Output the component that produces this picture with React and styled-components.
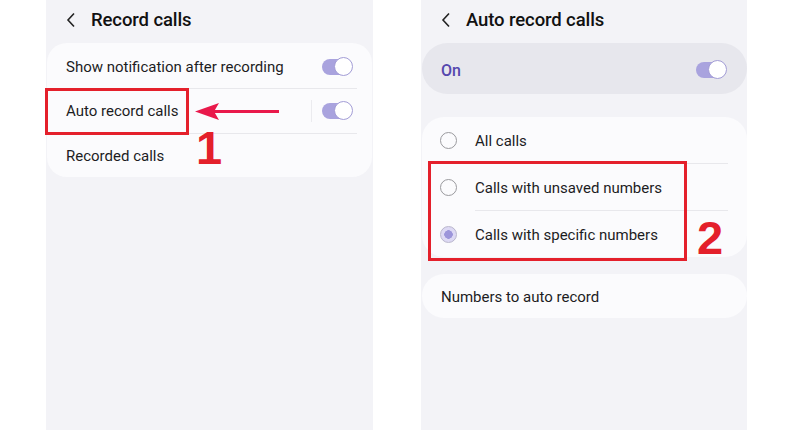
import React from "react";
import styled, { createGlobalStyle } from "styled-components";

const Global = createGlobalStyle`
  html, body { margin: 0; padding: 0; background: #ffffff; }
  body { font-family: Roboto, "Noto Sans", sans-serif; color: #1c1c1e; }
`;

const Page = styled.div`
  width: 800px;
  height: 430px;
  display: flex;
  gap: 48px;
  padding-left: 46px;
  box-sizing: border-box;
  overflow: hidden;
`;

const Phone = styled.div`
  position: relative;
  width: ${(p) => p.$w}px;
  height: 430px;
  background: #f3f3f7;
  display: flex;
  flex-direction: column;
`;

const Header = styled.div`
  height: 43px;
  display: flex;
  align-items: center;
  padding-left: 20px;
  padding-bottom: 4px;
  box-sizing: border-box;
  gap: 15px;
`;

const Title = styled.div`
  font-size: 18.5px;
  font-weight: 500;
  color: #111;
  letter-spacing: -0.1px;
`;

const Card = styled.div`
  margin: ${(p) => p.$m || "0 1px"};
  background: ${(p) => (p.$dark ? "#e7e7ed" : "#fbfbfd")};
  border-radius: ${(p) => p.$r || 20}px;
  display: flex;
  flex-direction: column;
  padding-top: ${(p) => p.$pt || 0}px;
`;

const Row = styled.div`
  position: relative;
  height: ${(p) => p.$h || 44}px;
  display: flex;
  align-items: center;
  padding: ${(p) => p.$ptop || 0}px ${(p) => p.$pr || 20}px 0 ${(p) => p.$pl || 19}px;
  box-sizing: border-box;
  font-size: 15px;
  color: #1d1d1f;
  border-bottom: ${(p) => (p.$divider ? "1px solid transparent" : "none")};
  &::after {
    content: "";
    display: ${(p) => (p.$divider ? "block" : "none")};
    position: absolute;
    left: ${(p) => p.$dl || 19}px;
    right: ${(p) => p.$dr || 15}px;
    bottom: -1px;
    height: 1px;
    background: #e8e8ec;
  }
`;

const Label = styled.div`
  flex: 1;
  color: ${(p) => (p.$accent ? "#5548ae" : "#1d1d1f")};
  font-size: ${(p) => (p.$accent ? 16 : 15)}px;
  font-weight: ${(p) => (p.$accent ? 500 : 400)};
`;

const VSep = styled.div`
  width: 1px;
  height: 22px;
  background: #ebebef;
  margin-right: 10px;
`;

const Track = styled.div`
  position: relative;
  width: 30px;
  height: 16px;
  border-radius: 8px;
  background: #a9a3de;
`;

const Knob = styled.div`
  position: absolute;
  right: -1px;
  top: -2px;
  width: 17px;
  height: 17px;
  border-radius: 50%;
  background: #fff;
  border: 1.5px solid #a39dd6;
`;

const Toggle = () => (
  <Track>
    <Knob />
  </Track>
);

const Radio = styled.div`
  width: 15px;
  height: 15px;
  border-radius: 50%;
  border: 1.5px solid ${(p) => (p.$on ? "#b9b6cc" : "#9a9a9e")};
  background: ${(p) =>
    p.$on ? "radial-gradient(circle, #9c95da 0 4px, #ddd9f4 4.5px)" : "transparent"};
  margin-right: 18px;
  flex: none;
`;

const Gap = styled.div`
  height: ${(p) => p.$h}px;
`;

const Back = () => (
  <svg width="10" height="16" viewBox="0 0 10 16">
    <polyline points="8,1.5 2,8 8,14.5" fill="none" stroke="#222" strokeWidth="1.6" strokeLinejoin="miter" />
  </svg>
);

const Frame = styled.div`
  position: absolute;
  left: ${(p) => p.$x}px;
  top: ${(p) => p.$y}px;
  width: ${(p) => p.$w}px;
  height: ${(p) => p.$h}px;
  border: 3.5px solid #e4202b;
  box-sizing: border-box;
`;

const Num = styled.div`
  position: absolute;
  left: ${(p) => p.$x}px;
  top: ${(p) => p.$y}px;
  font-family: "Liberation Sans", Arial, sans-serif;
  font-weight: 700;
  font-size: 47px;
  line-height: 1;
  color: #e4202b;
`;

const ArrowSvg = styled.svg`
  position: absolute;
  left: 148px;
  top: 101px;
`;

export default function App() {
  return (
    <>
      <Global />
      <Page>
        <Phone $w={327}>
          <Header>
            <Back />
            <Title>Record calls</Title>
          </Header>
          <Card $pt={2}>
            <Row $divider $h={44}>
              <Label>Show notification after recording</Label>
              <Toggle />
            </Row>
            <Row $divider $h={45}>
              <Label>Auto record calls</Label>
              <VSep />
              <Toggle />
            </Row>
            <Row $h={43} $ptop={1}>
              <Label>Recorded calls</Label>
            </Row>
          </Card>
          <Frame $x={-1} $y={88} $w={144} $h={47} />
          <ArrowSvg width="86" height="22" viewBox="0 0 86 22">
            <line x1="18" y1="10.5" x2="85" y2="10.5" stroke="#e9194b" strokeWidth="3" />
            <polygon points="1,10.5 25,2 20,10.5 25,19" fill="#e9194b" />
          </ArrowSvg>
          <Num $x={150} $y={124}>1</Num>
        </Phone>
        <Phone $w={326}>
          <Header>
            <Back />
            <Title>Auto record calls</Title>
          </Header>
          <Card $dark $r={26} $m="0 0 0 1px">
            <Row $h={51} $pr={21} $ptop={3}>
              <Label $accent>On</Label>
              <Toggle />
            </Row>
          </Card>
          <Gap $h={23} />
          <Card $m="0 0 0 1px" $r={22}>
            <Row $h={47} $divider $pl={18} $dl={53} $dr={19} $ptop={1}>
              <Radio />
              <Label>All calls</Label>
            </Row>
            <Row $h={47} $divider $pl={18} $dl={53} $dr={19} $ptop={1}>
              <Radio />
              <Label>Calls with unsaved numbers</Label>
            </Row>
            <Row $h={46} $pl={18} $ptop={1}>
              <Radio $on />
              <Label>Calls with specific numbers</Label>
            </Row>
          </Card>
          <Gap $h={17} />
          <Card $m="0 0 0 1px" $r={22}>
            <Row $h={44} $ptop={1}>
              <Label>Numbers to auto record</Label>
            </Row>
          </Card>
          <Frame $x={7} $y={161} $w={259} $h={100} />
          <Num $x={276} $y={214}>2</Num>
        </Phone>
      </Page>
    </>
  );
}
